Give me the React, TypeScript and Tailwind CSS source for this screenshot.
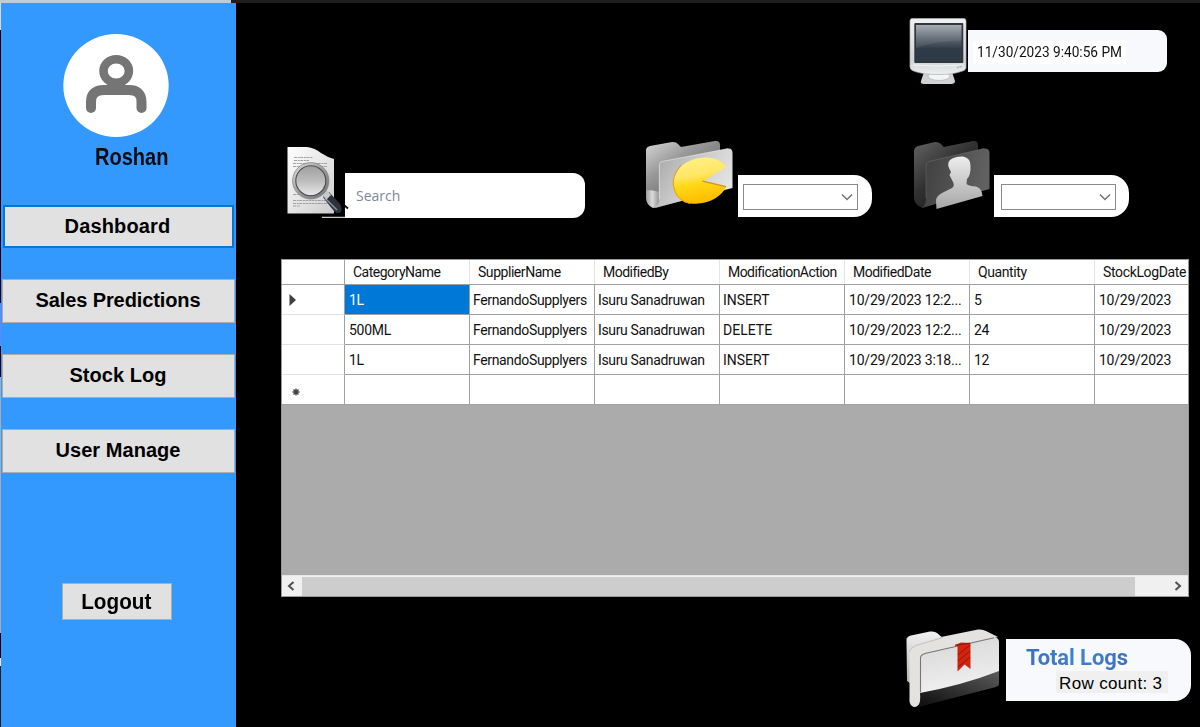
import React from "react";

const columns = [
  { name: "CategoryName", header: "tracking-[-0.5px]", cell: "tracking-[-0.3px]", pad: "pl-[4px]" },
  { name: "SupplierName", header: "tracking-[-0.45px]", cell: "tracking-[-0.35px]", pad: "pl-[3px]" },
  { name: "ModifiedBy", header: "tracking-[-0.5px]", cell: "tracking-[-0.35px]", pad: "pl-[3px]" },
  { name: "ModificationAction", header: "tracking-[-0.55px]", cell: "tracking-[0px]", pad: "pl-[3px]" },
  { name: "ModifiedDate", header: "tracking-[-0.5px]", cell: "tracking-[-0.2px]", pad: "pl-[4px]" },
  { name: "Quantity", header: "tracking-[-0.4px]", cell: "tracking-[-0.3px]", pad: "pl-[4px]" },
  { name: "StockLogDate", header: "tracking-[-0.35px]", cell: "tracking-[-0.25px]", pad: "pl-[4px]" },
];

const rows = [
  ["1L", "FernandoSupplyers", "Isuru Sanadruwan", "INSERT", "10/29/2023 12:2...", "5", "10/29/2023"],
  ["500ML", "FernandoSupplyers", "Isuru Sanadruwan", "DELETE", "10/29/2023 12:2...", "24", "10/29/2023"],
  ["1L", "FernandoSupplyers", "Isuru Sanadruwan", "INSERT", "10/29/2023 3:18...", "12", "10/29/2023"],
  ["", "", "", "", "", "", ""],
];

function MonitorIcon() {
  return (
    <svg className="block h-[72px] w-[60px] shrink-0" viewBox="908 15 60 72">
      <defs>
        <linearGradient id="mon-case" x1="0" y1="0" x2="0" y2="1">
          <stop offset="0" stopColor="#f0f1f2" />
          <stop offset="0.75" stopColor="#d0d3d5" />
          <stop offset="1" stopColor="#eef0f1" />
        </linearGradient>
        <linearGradient id="mon-screen" x1="0" y1="0" x2="0" y2="1">
          <stop offset="0" stopColor="#a5abb0" />
          <stop offset="0.35" stopColor="#616b74" />
          <stop offset="0.65" stopColor="#2f3c48" />
          <stop offset="1" stopColor="#2c3946" />
        </linearGradient>
      </defs>
      <path d="M924 72 L952 72 L955 81 Q955 84 951 84 L924 84 Q920 84 921 81 Z" fill="#cfd3d5" />
      <ellipse cx="939" cy="76" rx="11" ry="4.5" fill="#f2f4f5" stroke="#b4babd" strokeWidth="0.8" />
      <path d="M912 18.5 H964 Q966 18.5 966 21 L966 68 Q965 71 961 71.5 Q953 74.5 938 74.5 Q924 74.5 915 71.5 Q910 70 910 67 L910 21 Q910 18.5 912 18.5 Z" fill="url(#mon-case)" stroke="#aeb2b5" strokeWidth="0.7" />
      <path d="M913 65 Q938 67 963 65" fill="none" stroke="#f5f6f6" strokeWidth="1" />
      <rect x="914.3" y="23" width="49" height="40" rx="1" fill="#31373c" />
      <rect x="916" y="25" width="45.500" height="36.500" fill="url(#mon-screen)" />
      <path d="M916 48 Q934 41 961.500 40.500 V25 H916 Z" fill="#c4ced5" opacity="0.1" />
      <path d="M957 68 l2.5-1.5 M960 67 l2-1" stroke="#9fa3a5" strokeWidth="1" />
    </svg>
  );
}

function SearchDocIcon() {
  return (
    <svg className="relative block h-[85px] w-[64px] shrink-0" viewBox="285 135 64 85">
      <defs>
        <linearGradient id="doc-paper" x1="0" y1="0" x2="1" y2="1">
          <stop offset="0" stopColor="#ffffff" />
          <stop offset="1" stopColor="#cdcdcd" />
        </linearGradient>
        <linearGradient id="lens-glass" x1="0" y1="0" x2="0" y2="1">
          <stop offset="0" stopColor="#9c9c9c" />
          <stop offset="0.5" stopColor="#bcbcbc" />
          <stop offset="1" stopColor="#ececec" />
        </linearGradient>
        <linearGradient id="lens-ring" x1="0" y1="0" x2="1" y2="1">
          <stop offset="0" stopColor="#dedede" />
          <stop offset="0.5" stopColor="#9c9c9c" />
          <stop offset="1" stopColor="#777" />
        </linearGradient>
      </defs>
      <path d="M287.500 147 H307 Q315 148 321 153 Q327 157 334 159 V213.500 H287.500 Z" fill="url(#doc-paper)" />
      <g stroke="#999" strokeWidth="0.9" strokeDasharray="3 .7 2 .5">
        <path d="M294 157.500 H313 M294 160.500 H309 M293 163.500 H327 M293 166.500 H327 M293 194.500 H308 M293 200.500 H326 M293 203.500 H328 M293 206 H300" />
      </g>
      <path d="M322 217.300 H349" stroke="#fff" strokeWidth="1" />
      <path d="M323 197 L329 192 L340 204 Q343 209 340 213 L336 213 Q331 208 323 197 Z" fill="#2c323b" />
      <path d="M326 199 L337 210" stroke="#8a9098" strokeWidth="1.500" />
      <path d="M321 192 L326 189 L331 195 L326 200 Z" fill="#c5c7c9" />
      <path d="M344.500 205.500 L348 208.500" stroke="#111" strokeWidth="2" />
      <circle cx="310.800" cy="180.800" r="16.300" fill="url(#lens-glass)" stroke="url(#lens-ring)" strokeWidth="3.600" />
      <circle cx="310.800" cy="180.800" r="15" fill="none" stroke="#4a4c50" strokeWidth="1.100" />
      <circle cx="310.800" cy="180.800" r="18.200" fill="none" stroke="#76797b" strokeWidth="0.700" />
    </svg>
  );
}

function CategoryFolderIcon() {
  return (
    <svg className="block h-[85px] w-[96px] shrink-0" viewBox="642 135 96 85">
      <defs>
        <linearGradient id="cat-back" x1="0" y1="0" x2="0.600" y2="0.800">
          <stop offset="0" stopColor="#d8d8d8" />
          <stop offset="0.450" stopColor="#9a9a9a" />
          <stop offset="1" stopColor="#666" />
        </linearGradient>
        <linearGradient id="cat-front" x1="0" y1="0" x2="1" y2="0.500">
          <stop offset="0" stopColor="#a2a2a2" />
          <stop offset="0.500" stopColor="#c8c8c8" />
          <stop offset="1" stopColor="#e4e4e4" />
        </linearGradient>
        <linearGradient id="cat-roll" x1="0" y1="0" x2="1" y2="0">
          <stop offset="0" stopColor="#9b9b9b" />
          <stop offset="0.450" stopColor="#dcdcdc" />
          <stop offset="1" stopColor="#8c8c8c" />
        </linearGradient>
        <linearGradient id="pac" x1="0" y1="0" x2="0.200" y2="1">
          <stop offset="0" stopColor="#fff385" />
          <stop offset="0.450" stopColor="#ffe666" />
          <stop offset="0.620" stopColor="#ffd919" />
          <stop offset="1" stopColor="#ffbe00" />
        </linearGradient>
      </defs>
      <path d="M646 150 Q646 147 650 146 L672 142 Q676 141.500 678 144 L681 147 L715 141 Q720 140.500 720 145 V190 L656 208 Q646 205 646 197 Z" fill="url(#cat-back)" />
      <path d="M646 190 Q653 190 660 192 V205 Q657 208 653 208 Q646 205 646 197 Z" fill="url(#cat-roll)" />
      <path d="M659 165 Q659 162.500 662 161.500 L728 148.500 Q732.500 148 732.500 153 V188 L654 208 Q659 206 659 199 Z" fill="url(#cat-front)" />
      <path d="M659.300 199 V165 Q659.300 162.500 662 161.500 L728 148.600" fill="none" stroke="#f0f0f0" strokeOpacity="0.700" strokeWidth="0.800" />
      <path d="M703 181.200 L726 167 C722 160 711 156 700 158 C683 160 672 173 673.500 187 C675 199 685 205 698 203.500 C710 203 722 196 726 187 Z" fill="url(#pac)" />
      <path d="M681 165 Q670 178 674.500 190 Q678 201 690 203.500" fill="none" stroke="#e5a000" strokeWidth="1" />
      <path d="M702.500 181.200 L726 186.700" stroke="#d98f1c" strokeWidth="1.200" />
    </svg>
  );
}

function UserFolderIcon() {
  return (
    <svg className="block h-[85px] w-[84px] shrink-0" viewBox="910 135 84 85">
      <defs>
        <linearGradient id="usr-back" x1="0" y1="0" x2="0.800" y2="1">
          <stop offset="0" stopColor="#636363" />
          <stop offset="0.500" stopColor="#303030" />
          <stop offset="1" stopColor="#151515" />
        </linearGradient>
        <linearGradient id="usr-front" x1="0" y1="0" x2="1" y2="0.200">
          <stop offset="0" stopColor="#3d3d3d" />
          <stop offset="1" stopColor="#616161" />
        </linearGradient>
        <linearGradient id="usr-head" x1="0" y1="0" x2="0" y2="1">
          <stop offset="0" stopColor="#ededed" />
          <stop offset="1" stopColor="#a5a5a5" />
        </linearGradient>
      </defs>
      <path d="M914 151 Q914 147.500 918 146 L935 142 Q938 141.500 941 144 L944 147 L973 141 Q978 140.500 978 145 V190 L923 208 Q914 205 914 198 Z" fill="url(#usr-back)" />
      <path d="M926 166 Q926 163 929 161.500 L984 148.500 Q989.500 148 989.500 153 V189 L921 208 Q926 206 926 198 Z" fill="url(#usr-front)" />
      <path d="M926 198 V166 Q926 163 929 161.500 L984 148.500" fill="none" stroke="#808080" strokeOpacity="0.600" strokeWidth="0.700" />
      <path d="M950 160 Q955 156 963 156.500 Q971 158 970.500 166 Q971 175 967 179 L966.500 184 Q969 186 976 186.500 Q982 188 982.500 196 L936.500 209 L936 201 Q936 196 942 193 L952 188 Q955 186 953 182 L949.500 175 L951 172 L949 168 Q947 163 950 160 Z" fill="url(#usr-head)" />
    </svg>
  );
}

function LogsFolderIcon() {
  return (
    <svg className="block h-[86px] w-[101px] shrink-0" viewBox="905 626 101 86">
      <defs>
        <linearGradient id="log-back" x1="0" y1="0" x2="0" y2="1">
          <stop offset="0" stopColor="#f2f2f2" />
          <stop offset="1" stopColor="#aaa" />
        </linearGradient>
        <linearGradient id="log-front" x1="0" y1="0" x2="0.200" y2="1">
          <stop offset="0" stopColor="#d6d6d6" />
          <stop offset="1" stopColor="#f5f5f5" />
        </linearGradient>
        <linearGradient id="log-dark" x1="0" y1="1" x2="1" y2="0">
          <stop offset="0" stopColor="#0c0c0c" />
          <stop offset="1" stopColor="#5b5b5b" />
        </linearGradient>
      </defs>
      <path d="M906.500 640 Q906 637 911 635.500 L930 631.500 Q935 631 937 633 L944 639 L920 690 L907 681 Z" fill="url(#log-back)" />
      <path d="M909.500 653 Q909 648 915 645.500 L941 637 L978 629.500 Q983 629 986 631 L998 637 L920 660 V703 Q916 709 912 706 Q909 704 909.500 698 Z" fill="#e4e2df" />
      <path d="M909.500 652 Q910 648 916 645.500 L943 637.500" fill="none" stroke="#b5b3b0" strokeWidth="0.700" />
      <path d="M920.500 658 Q920.500 655 925 653.500 L993 637.500 Q999 637 999 642 V684 L920 706 Z" fill="url(#log-front)" />
      <path d="M920.500 692 V658 Q920.500 655 925 653.500 L994 637.800" fill="none" stroke="#777674" strokeWidth="1.100" />
      <path d="M920 693 Q963 685 999 671 V684 Q999 686 996 687 L918 707 Q921 702 920 693 Z" fill="url(#log-dark)" />
      <path d="M955 645 L961 642.500 L970.500 643 V669 L964.500 664.500 L957.500 671.500 V646.500 Z" fill="#d42410" />
      <path d="M958 655 L970 645 M958 661 L970 651 M958 667 L970 657" stroke="#a31b0a" strokeWidth="1.100" />
      <path d="M955 645.300 L970 643.200" stroke="#741b11" strokeWidth="1" />
    </svg>
  );
}

function NavButton({ label, active, spacing }: { label: string; active?: boolean; spacing: string }) {
  return (
    <button
      className={
        active
          ? "mb-[31px] flex h-[43px] w-[231px] shrink-0 items-center justify-center border-2 border-[#0078d7] bg-[#e1e1e1] pr-[2px] pb-[2px] text-[20px] font-bold text-black"
          : "mb-[31px] flex h-11 w-[233px] shrink-0 items-center justify-center border border-[#adadad] bg-[#e1e1e1] pr-px pb-[2px] text-[20px] font-bold text-black"
      }
    >
      <span className={spacing}>{label}</span>
    </button>
  );
}

function Sidebar() {
  return (
    <aside className="flex w-[235px] shrink-0 flex-col items-center bg-[#3399ff] pt-[31px] font-['Liberation_Sans',sans-serif]">
      <svg className="mr-[5px] block h-[103px] w-[106px] shrink-0" viewBox="63 34 106 103">
        <ellipse cx="116" cy="85.500" rx="52.700" ry="51.500" fill="#fff" />
        <ellipse cx="116.200" cy="71" rx="12.700" ry="11.800" fill="none" stroke="#757575" strokeWidth="8.500" />
        <path d="M91 108 V102 Q91 90 104 90 H129 Q141.500 90 141.500 102 V108" fill="none" stroke="#757575" strokeWidth="10" strokeLinecap="round" />
      </svg>
      <div className="mt-2 ml-[26px] h-[60px] text-[23px] leading-[25px] font-bold text-[#080c10]">
        <span className="inline-block w-[73px] origin-left scale-x-[0.870]">Roshan</span>
      </div>
      <NavButton label="Dashboard" active spacing="tracking-[0.15px]" />
      <NavButton label="Sales Predictions" spacing="tracking-[-0.1px]" />
      <NavButton label="Stock Log" spacing="tracking-[0.05px]" />
      <NavButton label="User Manage" spacing="tracking-[0.05px]" />
      <button className="mt-[79px] mr-px flex h-[37px] w-[110px] -translate-x-px shrink-0 items-center justify-center border border-[#adadad] bg-[#e1e1e1] pr-[2px] pb-px text-[22px] font-bold text-black">
        <span className="inline-block scale-x-[0.940]">Logout</span>
      </button>
    </aside>
  );
}

function Combo() {
  return (
    <div className="flex h-[26px] w-[115px] items-center justify-end border border-[#8a8a8a] bg-white pr-[4px]">
      <svg className="h-[8px] w-[12px]" viewBox="0 0 12 8">
        <path d="M1 1.500 L6 6.500 L11 1.500" fill="none" stroke="#707070" strokeWidth="1.500" />
      </svg>
    </div>
  );
}

function LogGrid() {
  return (
    <section className="ml-[45px] flex h-[338px] w-[908px] flex-col overflow-hidden border border-[#999] bg-[#ababab] font-['Roboto',sans-serif] text-[14px] text-[#111]">
      <div className="grid shrink-0 grid-cols-[63px_repeat(7,125px)] bg-white">
        <div className="h-[25px] border-r border-b border-[#a0a0a0]" />
        {columns.map((col) => (
          <div key={col.name} className="flex h-[25px] items-center border-b border-[#a0a0a0] pl-[8px] shadow-[inset_-1px_0_0_#e5e5e5]">
            <span className={col.header}>{col.name}</span>
          </div>
        ))}
      </div>
      {rows.map((row, r) => (
        <div key={r} className="grid shrink-0 grid-cols-[63px_repeat(7,125px)] bg-white">
          <div
            className={
              r === 3
                ? "flex h-[30px] items-center border-r border-b border-[#a0a0a0] pl-[7px]"
                : "flex h-[30px] items-center border-r border-b border-r-[#a0a0a0] border-b-[#e2e2e2] pt-px pl-[7px]"
            }
          >
            {r === 0 && (
              <svg className="h-[12px] w-[8px]" viewBox="0 0 8 12">
                <path d="M0.500 0 L7 6 L0.500 12 Z" fill="#404040" />
              </svg>
            )}
            {r === 3 && (
              <svg className="mt-[4px] ml-[2px] h-[10px] w-[10px]" viewBox="0 0 10 10">
                <path d="M5 1.500 V8.500 M1.500 5 H8.500 M2.500 2.500 L7.500 7.500 M7.500 2.500 L2.500 7.500" stroke="#444" strokeWidth="1.400" />
              </svg>
            )}
          </div>
          {row.map((cell, c) => (
            <div
              key={columns[c].name}
              className={
                r === 0 && c === 0
                  ? "flex h-[30px] items-center border-r border-b border-[#a0a0a0] bg-[#0078d7] pt-px text-white"
                  : "flex h-[30px] items-center border-r border-b border-[#a0a0a0] pt-px whitespace-nowrap"
              }
            >
              <span className={columns[c].pad}>
                <span className={columns[c].cell}>{cell}</span>
              </span>
            </div>
          ))}
        </div>
      ))}
      <div className="mt-auto flex h-[21px] shrink-0 items-center border-t border-[#e6e6e6] bg-[#f0f0f0]">
        <svg className="mr-[7px] ml-[5px] h-[10px] w-[8px]" viewBox="0 0 8 10">
          <path d="M6.500 1 L2 5 L6.500 9" fill="none" stroke="#505050" strokeWidth="2" />
        </svg>
        <div className="h-[19px] w-[833px] bg-[#cdcdcd]" />
        <svg className="mr-[6px] ml-auto h-[10px] w-[8px]" viewBox="0 0 8 10">
          <path d="M1.500 1 L6 5 L1.500 9" fill="none" stroke="#505050" strokeWidth="2" />
        </svg>
      </div>
    </section>
  );
}

export default function App() {
  return (
    <div className="flex h-[727px] w-[1200px] flex-col overflow-hidden bg-black">
      <div className="flex h-[3px] shrink-0">
        <div className="w-[231px] bg-[#b9cddd]" />
        <div className="flex-1 bg-[#1e1e1e]" />
      </div>
      <div className="flex flex-1">
        <div className="flex w-px shrink-0 flex-col">
          <div className="h-[27px] bg-[#d8d8d8]" />
          <div className="h-[273px] bg-black" />
          <div className="h-[43px] bg-[#6d82ff]" />
          <div className="h-[31px] bg-black" />
          <div className="h-[256px] bg-[#ababab]" />
          <div className="h-[25px] bg-black" />
          <div className="h-[8px] bg-[#e8e8e8]" />
          <div className="flex-1 bg-[#1e1e1e]" />
        </div>
        <Sidebar />
        <main className="flex flex-1 flex-col pt-3">
          <header className="flex h-[72px] pl-[672px]">
            <MonitorIcon />
            <div className="mt-[15px] flex h-[42px] w-[199px] items-center rounded-r-[9px] bg-[#f8f9fc] pt-[3px] pl-[5px] font-['Roboto',sans-serif] text-[15px] text-[#111]">
              <span className="w-[153px] bg-white pl-1 whitespace-nowrap">
                <span className="inline-block origin-left scale-x-[0.910]">11/30/2023 9:40:56 PM</span>
              </span>
            </div>
          </header>
          <div className="mt-12 flex h-[85px] pl-[49px]">
            <SearchDocIcon />
            <div className="mt-[38px] -ml-1 flex h-[45px] w-[240px] items-center rounded-r-[12px] bg-white pb-px pl-[11px] font-['Open_Sans',sans-serif] text-[14px] text-[#7d8998]">
              Search
            </div>
            <div className="ml-[57px] flex">
              <CategoryFolderIcon />
              <div className="mt-[40px] flex h-[42px] w-[134px] items-center rounded-r-[18px] bg-white pt-px pl-[5px]">
                <Combo />
              </div>
            </div>
            <div className="ml-[38px] flex">
              <UserFolderIcon />
              <div className="mt-[40px] flex h-[42px] w-[135px] items-center rounded-r-[18px] bg-white pt-px pl-[7px]">
                <Combo />
              </div>
            </div>
          </div>
          <div className="h-[39px] shrink-0" />
          <LogGrid />
          <footer className="mt-[29px] flex h-[86px] pl-[669px]">
            <LogsFolderIcon />
            <div className="mt-[13px] h-[62px] w-[185px] rounded-r-[16px] bg-[#f8f9fc] pt-[5px]">
              <div className="ml-5 h-[27px] w-[103px] bg-linear-to-r from-[#3b70c0] via-[#3f83cf] to-[#3b70c0] bg-clip-text font-['Roboto',sans-serif] text-[22px] leading-[27px] font-bold tracking-[-0.1px] whitespace-nowrap text-transparent">
                Total Logs
              </div>
              <div className="ml-[50px] h-[22px] w-[112px] bg-[#f0f0f0] pl-[3px] font-['Liberation_Sans',sans-serif] text-[17px] leading-[25px] tracking-[0.35px] whitespace-nowrap text-black">
                Row count: 3
              </div>
            </div>
          </footer>
        </main>
      </div>
    </div>
  );
}
